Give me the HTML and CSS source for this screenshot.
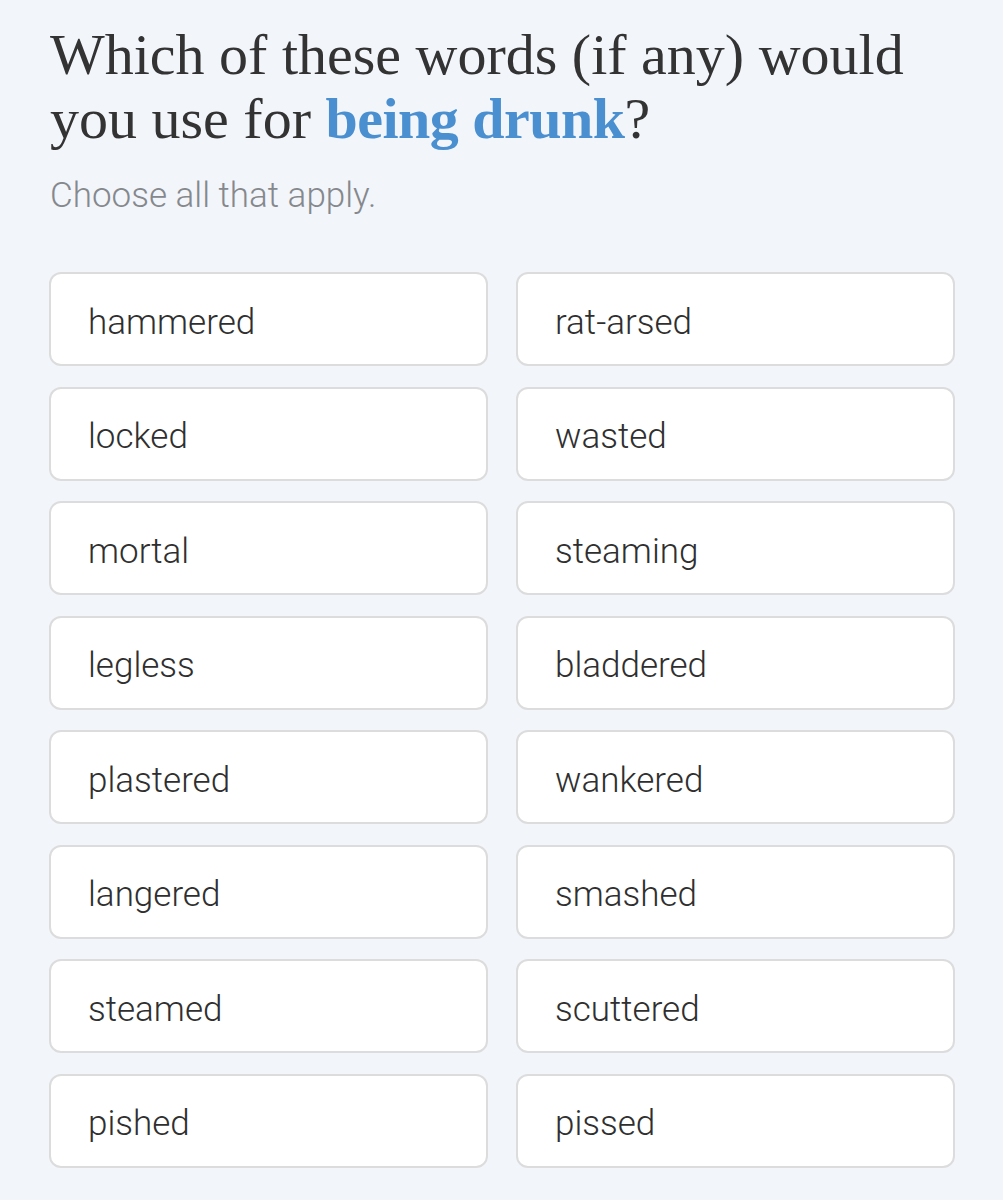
FILE: index.html
```html
<!DOCTYPE html>
<html>
<head>
<meta charset="utf-8">
<link rel="stylesheet" href="styles.css">
</head>
<body>
<main class="page">
  <h1 class="question">Which of these words (if any) would you use for <strong class="topic">being drunk</strong>?</h1>
  <p class="hint">Choose all that apply.</p>
  <div class="options">
    <div class="option">hammered</div>
    <div class="option">rat-arsed</div>
    <div class="option">locked</div>
    <div class="option">wasted</div>
    <div class="option">mortal</div>
    <div class="option">steaming</div>
    <div class="option">legless</div>
    <div class="option">bladdered</div>
    <div class="option">plastered</div>
    <div class="option">wankered</div>
    <div class="option">langered</div>
    <div class="option">smashed</div>
    <div class="option">steamed</div>
    <div class="option">scuttered</div>
    <div class="option">pished</div>
    <div class="option">pissed</div>
  </div>
</main>
</body>
</html>
```
FILE: styles.css
```css
html, body {
  margin: 0;
  padding: 0;
  background: #f2f5fa;
}
.page {
  padding: 23px 48px 0 49px;
}
.question {
  margin: 0;
  font-family: "Liberation Serif", "DejaVu Serif", serif;
  font-weight: 400;
  font-size: 58px;
  line-height: 64px;
  color: #333333;
  padding-left: 1px;
}
.topic {
  color: #4a8fd0;
  font-weight: 700;
  letter-spacing: -0.5px;
}
.hint {
  margin: 25px 0 0 1px;
  font-family: Roboto, "Liberation Sans", Arial, sans-serif;
  font-weight: 300;
  font-size: 35px;
  line-height: 40px;
  color: #85888c;
}
.options {
  margin-top: 56px;
  display: grid;
  grid-template-columns: 439px 439px;
  column-gap: 28px;
  row-gap: 20.5px;
}
.option {
  box-sizing: border-box;
  height: 94px;
  background: #ffffff;
  border: 2px solid #dcdcdc;
  border-radius: 12px;
  padding: 6px 0 0 37px;
  display: flex;
  align-items: center;
  font-family: Roboto, "Liberation Sans", Arial, sans-serif;
  font-weight: 300;
  font-size: 35px;
  color: #2f2f2f;
}
```
